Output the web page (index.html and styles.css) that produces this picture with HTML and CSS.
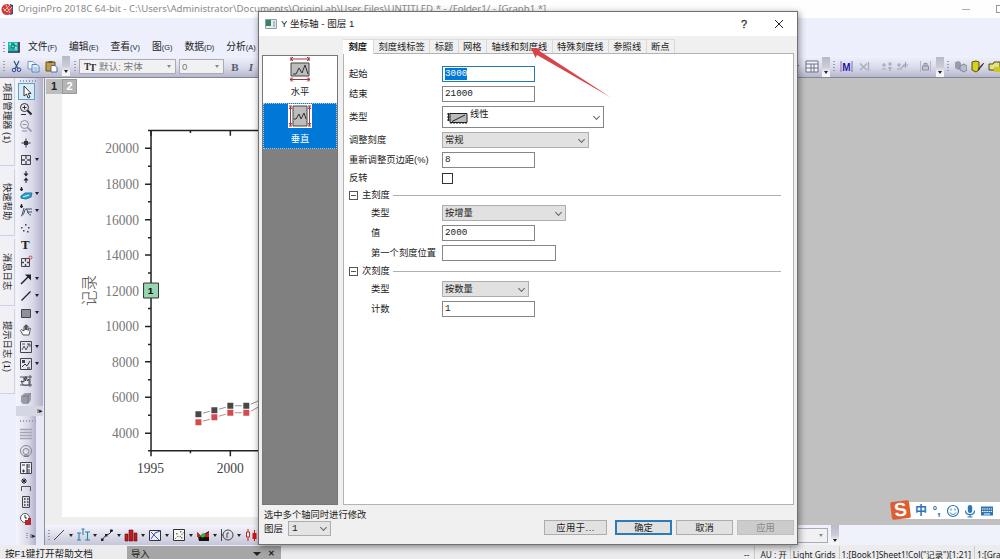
FILE: index.html
```
<!DOCTYPE html>
<html lang="zh-CN">
<head>
  <meta charset="UTF-8" />
  <title>OriginPro 2018C</title>
  <link rel="stylesheet" href="styles.css">
</head>
<body>
  <div class="app">
    <header class="titlebar">
      <svg class="app-icon" viewBox="0 0 13 13"><path d="M9 1l3 1v9l-3 1z" fill="#234a8c"/><circle cx="6" cy="6.5" r="5.5" fill="#cf3f3a"/><path d="M2 5l4 4 5-5M3 8l6-6M5 2l4 8" stroke="#f6b5ae" fill="none"/></svg>
      <span class="title-text">OriginPro 2018C 64-bit - C:\Users\Administrator\Documents\OriginLab\User Files\UNTITLED * - /Folder1/ - [Graph1 *]</span>
      <span class="win-min"></span><span class="win-max"></span>
    </header>

    <nav class="menubar">
      <i class="grip"></i>
      <svg class="menu-icon" viewBox="0 0 13 12"><path d="M1 1h10v9H1z" fill="#19b8b0"/><path d="M12 1v10H1" stroke="#223" stroke-width="1.6" fill="none"/><path d="M2 3h2v3h5v3M7 3h3" stroke="#dff" fill="none"/><circle cx="6" cy="5" r="2" fill="none" stroke="#065"/></svg>
      <span>文件<small>(F)</small></span>
      <span>编辑<small>(E)</small></span>
      <span>查看<small>(V)</small></span>
      <span>图<small>(G)</small></span>
      <span>数据<small>(D)</small></span>
      <span>分析<small>(A)</small></span>
    </nav>

    <div class="toolbar">
      <i class="grip"></i>
      <svg class="ico cut" viewBox="0 0 13 13"><path d="M4 1l4 8M9 1L5 9" stroke="#35507c" stroke-width="1.2"/><circle cx="4" cy="10" r="1.8" fill="none" stroke="#2448a0"/><circle cx="9" cy="9.7" r="1.8" fill="none" stroke="#2448a0"/></svg>
      <svg class="ico copy" viewBox="0 0 13 13"><path d="M1 1.500h5l2 2V9H1z" fill="#f4f8ff" stroke="#6f92c8"/><path d="M5 4.500h5l2 2V12H5z" fill="#e4eefc" stroke="#5580bc"/><path d="M6.500 8h4M6.500 10h4" stroke="#88a8d8"/></svg>
      <svg class="ico paste" viewBox="0 0 13 13"><path d="M1 2h9v9H1z" fill="#c99a3c" stroke="#6b5012"/><path d="M3.500 1h4v2h-4z" fill="#555"/><path d="M6 5.500h4l2 2V12H6z" fill="#fff" stroke="#556b98"/></svg>
      <i class="overflow"></i>
      <i class="grip"></i>
      <span class="combo combo-font"><b class="tt">T<small>T</small></b>默认: 宋体<i class="caret"></i></span>
      <span class="combo combo-size">0<i class="caret"></i></span>
      <b class="fmt">B</b><b class="fmt"><em>I</em></b>
      <div class="toolbar-right">
        <i class="caret dark"></i>
        <svg class="ico table" viewBox="0 0 14 13"><path d="M1 1h12v11H1zM1 4h12M1 8h12M6 4v8M9 4v8" fill="#f5f6fc" stroke="#6d7186"/></svg>
        <i class="overflow"></i>
        <i class="grip"></i>
        <svg class="ico mask" viewBox="0 0 13 13"><path d="M1 1v11M12 1v11" stroke="#8a6bbd"/><text x="6.500" y="10.500" text-anchor="middle">M</text></svg>
        <svg class="ico unmask" viewBox="0 0 13 13"><path d="M11.500 2v9M3 3.500l7 6.500M10 3.500L3 10" stroke="#a9abbd" stroke-width="1.300"/></svg>
        <i class="sep"></i>
        <svg class="ico shift-a" viewBox="0 0 13 13"><path d="M2 5h4M4 3v4M2 9h4M8 4h4M10 2v4M8 8h4M10 7v4" stroke="#a3a6b8" stroke-width="1.200"/></svg>
        <svg class="ico shift-b" viewBox="0 0 13 13"><path d="M1 5h4M3 3v4M1 9h5M7 5h5M9.500 2v6M5 8l4-3" stroke="#a0a3b6" stroke-width="1.200"/></svg>
        <i class="sep"></i>
        <svg class="ico lock" viewBox="0 0 13 13"><path d="M3.500 6h6v4h-6zM5 6V3.500h3V6" fill="#c4c5d2" stroke="#8a8da0"/><path d="M1.500 1v11M11.500 1v11" stroke="#b5b7c6"/></svg>
        <i class="overflow"></i>
        <i class="grip"></i>
        <svg class="ico cubes" viewBox="0 0 13 13"><path d="M1 2l4-1 2 2v6l-3 1-3-2z" fill="#999cab"/><path d="M6 6l4-2 3 2v4l-3 2-4-2z" fill="#bbbdcb" stroke="#80839a"/></svg>
        <svg class="ico script" viewBox="0 0 13 13"><path d="M1 2l4-1 3 1v8l-3 2-4-2z" fill="#d8d01e" stroke="#55520a"/><path d="M7 10l5-6" stroke="#333" stroke-width="1.300"/><path d="M12 4l1-1" stroke="#c22"/></svg>
        <svg class="ico folder" viewBox="0 0 13 13"><path d="M1 4h4l1-2h6v8H1z" fill="#e4e08a" stroke="#4c4a12"/><path d="M6 7h7v5H6z" fill="#ccc91a"/></svg>
      </div>
    </div>

    <main class="workspace">
      <aside class="side-tabs">
        <span class="side-tab tall">项目管理器 (1)</span>
        <span class="side-tab">快速帮助</span>
        <span class="side-tab">消息日志</span>
        <span class="side-tab last">提示日志 (1)</span>
      </aside>

      <aside class="tools">
        <div class="tool-group first">
          <i class="hgrip"></i>
          <span class="tool selected"><svg viewBox="0 0 14 14"><path d="M4 1v10l2.500-2 1.500 4 2-1-1.800-3.600H11z" fill="#fff" stroke="#333"/></svg></span>
          <span class="tool"><svg viewBox="0 0 14 14"><circle cx="5.500" cy="5.500" r="4" fill="none" stroke="#333"/><path d="M3.500 5.500h4M5.500 3.500v4M2 12.500h5" stroke="#333"/><path d="M8.500 8.500l4 4" stroke="#222" stroke-width="2"/></svg></span>
          <span class="tool"><svg viewBox="0 0 14 14"><circle cx="5.500" cy="5.500" r="4" fill="none" stroke="#8d8f9d"/><path d="M3.500 5.500h4M3 12h5" stroke="#8d8f9d"/><path d="M8.500 8.500l4 4" stroke="#8d8f9d" stroke-width="1.600"/></svg></span>
          <span class="tool"><svg viewBox="0 0 14 14"><path d="M7 2.500v9M2.500 7h9" stroke="#333"/><path d="M5 5h4v4H5z" fill="#333"/></svg></span>
          <span class="tool more"><svg viewBox="0 0 14 14"><path d="M2.500 2.500h9v9h-9z" fill="none" stroke="#444"/><path d="M7 3v3M7 8v3M3 7h3M8 7h3" stroke="#444" stroke-width="1.300"/></svg></span>
          <span class="tool"><svg viewBox="0 0 14 14"><path d="M7 1v4M7 13V9" stroke="#222"/><path d="M4.500 3.500h5L7 6.500zM4.500 10.500h5L7 7.500z" fill="#222"/></svg></span>
          <span class="tool more"><svg viewBox="0 0 14 14"><path d="M2.500 0v4M1 2.500h3" stroke="#222" stroke-width="1.300"/><path d="M2 9l4-3 7 0-1 4-5 2-5-1z" fill="#2aa5cf" stroke="#28708e"/><path d="M4 10l6-2" stroke="#bff"/></svg></span>
          <span class="tool more"><svg viewBox="0 0 14 14"><path d="M2.500 0v4M1 2.500h3" stroke="#222" stroke-width="1.300"/><path d="M2 12c4-1 3-7 5-7s1 6 5 6M7 5h6M8 8h5M5 4l-2 7" fill="none" stroke="#454e66"/></svg></span>
          <span class="tool"><svg viewBox="0 0 14 14"><path d="M6 3h1.500v1.500H6zM2 6h1.500v1.500H2zM9 6h1.500v1.500H9zM4 9h1.500v1.500H4zM8 10h1.500v1.500H8z" fill="#444"/></svg></span>
          <span class="tool text-tool">T</span>
          <span class="tool"><svg viewBox="0 0 14 14"><path d="M2.500 3.500h8v8h-8z" fill="none" stroke="#444"/><path d="M6.500 4v2.500M6.500 9v2M3 7.500h2M8 7.500h2" stroke="#444" stroke-width="1.300"/><circle cx="11.500" cy="2.500" r="1.500" fill="none" stroke="#d3404c"/></svg></span>
          <span class="tool more"><svg viewBox="0 0 14 14"><path d="M2 12l8-8" stroke="#222" stroke-width="1.500"/><path d="M6 2.500h6v6z" fill="#222"/></svg></span>
          <span class="tool more"><svg viewBox="0 0 14 14"><path d="M2.500 11.500l9-9" stroke="#222" stroke-width="1.300"/></svg></span>
          <span class="tool more"><svg viewBox="0 0 14 14"><path d="M2.500 3.500h9v8h-9z" fill="#8e909a" stroke="#444"/></svg></span>
          <span class="tool"><svg viewBox="0 0 14 14"><path d="M4 12L1.500 7.500l1-1L5 8V3.500h1.300V7V2h1.400v5V3h1.300v4.500L10.500 5l1 .5L10 12z" fill="#f8f8ff" stroke="#444" stroke-width=".9"/></svg></span>
          <span class="tool more"><svg viewBox="0 0 14 14"><path d="M1.500 1.500h11v11h-11z" fill="none" stroke="#444"/><path d="M3 10l2-4 2 4 3-6M8 4h3v3M3 4h3" fill="none" stroke="#555"/></svg></span>
          <span class="tool more"><svg viewBox="0 0 14 14"><path d="M1.500 1.500h11v11h-11z" fill="none" stroke="#444"/><path d="M3 3h3v3H3z" fill="#444"/><path d="M3 10l3-3 2 2 3-5M8 11h3" fill="none" stroke="#333"/></svg></span>
          <span class="tool"><svg viewBox="0 0 14 14"><path d="M1 3h12M1 11h12M11 1v12" stroke="#555"/><path d="M4 11L2 7l3 1V3.500L6.500 7l.5-4.500L8.500 7 10 5v6z" fill="#eef" stroke="#333" stroke-width=".9"/></svg></span>
          <span class="tool"><svg viewBox="0 0 14 14"><path d="M2 5l4-3h6v7l-3 4H4l-2-2z" fill="#999ba6"/><path d="M4 5h5v7M9 5l3-3" fill="none" stroke="#777986"/></svg></span>
          <i class="tool-end">ı▸</i>
        </div>
        <div class="tool-group second">
          <i class="hgrip"></i>
          <span class="tool"><svg viewBox="0 0 14 14"><path d="M1 2.500h12M1 5.500h12M1 8.500h12M1 11.500h12" stroke="#a4a5b0" stroke-width="1.400"/></svg></span>
          <span class="tool"><svg viewBox="0 0 14 14"><circle cx="7" cy="7" r="5.500" fill="none" stroke="#83858f"/><circle cx="7" cy="7.500" r="3" fill="none" stroke="#83858f"/><path d="M5 12h5" stroke="#666"/></svg></span>
          <span class="tool"><svg viewBox="0 0 14 14"><path d="M1.500 1.500h11v11h-11z" fill="#eef" stroke="#444"/><path d="M3 4h3M3 10h3M4.500 8.500v3M8 4h3M8 6h3M8 9h3M8 11h3M8 3v9" stroke="#333"/></svg></span>
          <span class="tool"><svg viewBox="0 0 14 14"><path d="M3 1l4 4M7 1L3 5M5 0v6M2 3h6" stroke="#222"/><path d="M2.500 13V8.500h9V13" fill="none" stroke="#555"/></svg></span>
          <span class="tool"><svg viewBox="0 0 14 14"><path d="M3.500 1.500h7v11h-7z" fill="none" stroke="#444"/><path d="M5 4h1.500M8 4h1.500M5 7h1.500M8 7h1.500M5 10h1.500M8 10h1.500" stroke="#333" stroke-width="1.400"/></svg></span>
          <span class="tool"><svg viewBox="0 0 14 14"><circle cx="6" cy="6" r="4.500" fill="#fff" stroke="#555"/><path d="M6 3v3h2" fill="none" stroke="#333"/><path d="M6 8h3V6h3v7H6z" fill="#b8232f"/></svg></span>
          <i class="tool-dots">⁝ ı▸</i>
        </div>
      </aside>

      <section class="document">
        <div class="page">
          <div class="layers"><b>1</b><b class="off">2</b></div>
          <svg class="chart" viewBox="62 77 198 440">
            <path class="axis" d="M151 129V451M148 129.500H260M148 450.500H260"/>
            <path class="ticks" d="M145 147.500h6M145 183.500h6M145 219h6M145 254.500h6M145 290.500h6M145 326h6M145 361.500h6M145 397h6M145 433h6
              M148 165.500h3M148 201h3M148 237h3M148 272.500h3M148 308h3M148 344h3M148 379.500h3M148 415h3
              M151 129v6M230.500 129v6M190.500 129v3M151 450v6M230.500 450v6M190.500 450v3"/>
            <g class="labels-y">
              <text x="139" y="152.500">20000</text>
              <text x="139" y="188.500">18000</text>
              <text x="139" y="224">16000</text>
              <text x="139" y="259.500">14000</text>
              <text x="139" y="295.500">12000</text>
              <text x="139" y="331">10000</text>
              <text x="139" y="366.500">8000</text>
              <text x="139" y="402">6000</text>
              <text x="139" y="438">4000</text>
            </g>
            <g class="labels-x">
              <text x="150.500" y="473">1995</text>
              <text x="230.500" y="473">2000</text>
            </g>
            <text class="axis-title" transform="translate(95 290) rotate(-90)">记录</text>
            <path class="series" d="M203 413l7-2M219 409l7-2M235 405.500h7M251 404l9-4"/>
            <path class="series red" d="M203 421l7-2M219 416l7-2M235 412.500h7M251 411l9-5"/>
            <path class="dots-black" d="M195.500 411h6v6h-6zM211.500 407h6v6h-6zM227.500 402.500h6v6h-6zM243.500 402.500h6v6h-6z"/>
            <path class="dots-red" d="M195.500 419h6v6h-6zM211.500 414h6v6h-6zM227.500 409.500h6v6h-6zM243.500 409.500h6v6h-6z"/>
            <path class="mark" d="M143.500 282.500h15v15h-15z"/>
            <text class="mark-text" x="150.500" y="293.500">1</text>
          </svg>
        </div>
        <div class="plotbar">
          <i class="grip"></i>
          <span class="plot"><svg viewBox="0 0 14 14"><path d="M2 12L12 2" stroke="#444"/></svg></span>
          <span class="plot"><svg viewBox="0 0 14 14"><path d="M1 5h4M3 5v7M1 12h4M7 1v6M5.500 1h3M9 4h5M11.500 4v8M9 12h5" stroke="#2f7fa8" stroke-width="1.100"/></svg></span>
          <span class="plot"><svg viewBox="0 0 14 14"><path d="M2 12l4-5 3-1 4-4" fill="none" stroke="#333"/><path d="M1 10.500h2.500V13H1zM5 6h2.500v2.500H5zM10 1.500h2.500V4H10z" fill="#222"/></svg></span>
          <span class="plot"><svg viewBox="0 0 14 14"><path d="M1 6h3v7H1zM5 2h4v11H5zM10 5h3v8h-3z" fill="#c11a1f" stroke="#601010" stroke-width=".6"/></svg></span>
          <span class="plot"><svg viewBox="0 0 14 14"><path d="M1.500 2.500h11v10h-11z" fill="#eef" stroke="#333"/><path d="M3 4l8 8M3 11l4-6 5-2" stroke="#3b50b5" fill="none"/></svg></span>
          <span class="plot"><svg viewBox="0 0 14 14"><path d="M1.500 1.500h11v11h-11z" fill="#f8f8f0" stroke="#333"/><path d="M3 11l3-3 2 1 4-5" stroke="#777" stroke-dasharray="2 1" fill="none"/><path d="M8 3h1.500v1.500H8zM4 5h1.500v1.500H4zM9 9h1.500v1.500H9z" fill="#777"/></svg></span>
          <span class="plot"><svg viewBox="0 0 14 14"><path d="M1 4l4 4 3-2 5-3v10H3z" fill="#111"/><path d="M1 4l4 5H1zM8 7l5-3v5H7z" fill="#d02020"/><path d="M4 8l3 2 3-4-3-1z" fill="#34ae3d"/></svg></span>
          <span class="plot"><svg viewBox="0 0 14 14"><path d="M1.500 1v12M1 7h2" stroke="#444"/><circle cx="8" cy="7" r="5" fill="none" stroke="#444"/><path d="M7 10V5h2" fill="none" stroke="#444"/></svg></span>
          <span class="plot"><svg viewBox="0 0 14 14"><path d="M4 1v12M10.500 2v11" stroke="#b22"/><path d="M2.500 4h3v5h-3z" fill="#fff" stroke="#b22"/><path d="M8.500 5h4v6h-4z" fill="#d11"/></svg></span>
          <div class="plotbar-right"><span class="combo combo-blank"><i class="caret"></i></span><i class="overflow"></i></div>
        </div>
      </section>
    </main>

    <footer class="statusbar">
      <span class="hint">按F1键打开帮助文档</span>
      <span class="import">导入<i class="caret dark"></i><b>✕</b></span>
      <div class="status-info"><span>--</span><span>AU : 开</span><span>Light Grids</span><span>1:[Book1]Sheet1!Col("记录")[1:21]</span><span>1:[Gra</span></div>
    </footer>
  </div>

  <div class="dialog">
    <div class="dialog-title">
      <svg class="dialog-icon" viewBox="0 0 12 10"><path d="M.5.500h11v9H.5z" fill="#e6eef0" stroke="#8ba0a6"/><path d="M1 1h5v6H1z" fill="#3c8064"/><path d="M8 2h2v6H8z" fill="#a9bfc8"/></svg>
      <span>Y 坐标轴 - 图层 1</span>
      <span class="help">?</span>
      <svg class="close" viewBox="0 0 10 10"><path d="M1 1l8 8M9 1L1 9" stroke="#222"/></svg>
    </div>
    <div class="dialog-main">
      <div class="axis-list">
        <div class="axis-item">
          <svg viewBox="0 0 24 26"><path d="M3 7h18v13H3z" fill="#bdbdbd" stroke="#444"/><path d="M5 18h3l3-6 3 5 3-8 3 9" fill="none" stroke="#333"/><path d="M2 3h20M2 23.500h20M3 1v4M21 1v4M3 21.500v4M21 21.500v4M5 1l-2 2 2 2M19 1l2 2-2 2M5 21.500l-2 2 2 2M19 21.500l2 2-2 2" fill="none" stroke="#a33440"/></svg>
          水平
        </div>
        <div class="axis-item current">
          <svg viewBox="0 0 24 26"><path d="M0 1h24v24H0z" fill="#fff"/><path d="M5 3h14v20H5z" fill="#bdbdbd" stroke="#444"/><path d="M6 16h2l3-5 2 5 3-6 2 6" fill="none" stroke="#333"/><path d="M2.500 3v20M21.500 3v20M1 3h3M20 3h3M1 23h3M20 23h3M1 6l1.500-2L4 6M20 6l1.500-2L23 6M1 20l1.500 2L4 20M20 20l1.500 2 1.500-2" fill="none" stroke="#a33440"/></svg>
          垂直
        </div>
      </div>
      <div class="tab-area">
        <div class="tabs">
          <span class="tab active">刻度</span><span class="tab">刻度线标签</span><span class="tab">标题</span><span class="tab">网格</span><span class="tab">轴线和刻度线</span><span class="tab">特殊刻度线</span><span class="tab">参照线</span><span class="tab">断点</span>
        </div>
        <div class="panel">
          <div class="row"><label>起始</label><span class="field w92 focus"><mark>3000</mark></span></div>
          <div class="row"><label>结束</label><span class="field w92">21000</span></div>
          <div class="row high"><label>类型</label><span class="field type-select"><svg viewBox="0 0 22 14"><path d="M4 2.500h17v9H4z" fill="#bbb" stroke="#222"/><path d="M6 10.500L19 4M1 3h3M1 6h3M1 9h3M2.500 2v8M5 13v-2M8 13v-2M11 13v-2M14 13v-2M17 13v-2M20 13v-2" stroke="#222"/></svg>线性<i class="chev"></i></span></div>
          <div class="row"><label>调整刻度</label><span class="field select w147">常规<i class="chev"></i></span></div>
          <div class="row"><label>重新调整页边距(%)</label><span class="field w92">8</span></div>
          <div class="row check-row"><label>反转</label><span class="check"></span></div>
          <div class="group"><i class="minus"></i><span>主刻度</span></div>
          <div class="row sub"><label>类型</label><span class="field select w124">按增量<i class="chev"></i></span></div>
          <div class="row sub"><label>值</label><span class="field w92">2000</span></div>
          <div class="row sub"><label>第一个刻度位置</label><span class="field w114"></span></div>
          <div class="group"><i class="minus"></i><span>次刻度</span></div>
          <div class="row sub"><label>类型</label><span class="field select w87">按数量<i class="chev"></i></span></div>
          <div class="row sub"><label>计数</label><span class="field w92">1</span></div>
        </div>
      </div>
    </div>
    <div class="dialog-foot">
      <div class="layer-pick">
        <span>选中多个轴同时进行修改</span>
        <div>图层<span class="field layer-select">1<i class="chev"></i></span></div>
      </div>
      <div class="buttons">
        <span class="btn">应用于...</span><span class="btn primary">确定</span><span class="btn">取消</span><span class="btn disabled">应用</span>
      </div>
    </div>
  </div>

  <svg class="pointer" viewBox="0 0 82 54"><path d="M1 2l10 .5-1.500 2.500L81 51.500 7 9 5.500 12z" fill="#d9434a"/></svg>

  <div class="ime">
    <b class="ime-logo">S</b>
    <b>中</b><b class="punct">°,</b>
    <svg viewBox="0 0 14 14"><circle cx="7" cy="7" r="5.500" fill="none" stroke="#2d76b5" stroke-width="1.200"/><path d="M5 4.500v2M9 4.500v2M4 8.500c1.500 2.500 4.500 2.500 6 0" fill="none" stroke="#2d76b5"/></svg>
    <svg viewBox="0 0 14 14"><rect x="4.800" y="1" width="4.400" height="8" rx="2.200" fill="#2d76b5"/><path d="M2.500 6.500c0 5.500 9 5.500 9 0M7 10.500V13M4.500 13h5" fill="none" stroke="#2d76b5" stroke-width="1.200"/></svg>
    <svg viewBox="0 0 14 14"><path d="M1 2.500h12v9H1z" fill="#2d76b5"/><path d="M2 5h10M2 7.500h10" stroke="#fff" stroke-dasharray="1.500 .7"/><path d="M4 10h6" stroke="#fff"/></svg>
  </div>
</body>
</html>
```
FILE: styles.css
```
* { box-sizing: border-box; }

body {
  margin: 0;
  width: 1000px;
  height: 559px;
  overflow: hidden;
  position: relative;
  font-family: "Liberation Sans", "Noto Sans CJK SC", sans-serif;
  font-size: 9.3px;
  line-height: 1;
  color: #222;
  white-space: nowrap;
}

i { font-style: normal; }
svg { display: block; flex: none; }

.app {
  display: flex;
  flex-direction: column;
  width: 1000px;
  height: 559px;
  background: #edf0fc;
}

/* main window */
.titlebar {
  display: flex;
  align-items: center;
  height: 18px;
  padding-left: 1px;
  background: #fefefe;
}
.app-icon { width: 13px; height: 13px; }
.title-text {
  margin-left: 4px;
  font-family: "Noto Sans", sans-serif;
  font-size: 9.65px;
  color: #8a8a8a;
}
.win-min { width: 8px; height: 1px; margin-left: auto; background: #aaa; }
.win-max { width: 10px; height: 8px; margin: 0 -6px 0 26px; border: 1px solid #999; }

.menubar {
  display: flex;
  align-items: center;
  height: 38px;
  padding: 20px 0 0 3px;
  gap: 12px;
  font-size: 9.8px;
}
.menubar small { font-size: 7.4px; }
.menu-icon { width: 13px; height: 12px; margin: 0 -4px 0 -10px; }

.grip {
  width: 2px;
  height: 11px;
  flex: none;
  background: repeating-linear-gradient(#9c9ead 0 1px, transparent 1px 3px);
}
.toolbar, .plotbar {
  display: flex;
  align-items: center;
  height: 22px;
  flex: none;
  padding-left: 3px;
  background: linear-gradient(#f0f2fc, #dcddeb 50%, #b7b8cd);
  border-bottom: 1px solid #85868f;
}
.ico { width: 13px; height: 13px; }
.cut { margin-left: 5px; }
.copy { margin-left: 4px; }
.paste { margin-left: 5px; margin-right: 4px; }
.overflow {
  width: 8px;
  height: 20px;
  flex: none;
  align-self: flex-start;
  background: linear-gradient(#b9bac9, #cbccd8 50%, #f4f4fa 80%);
  display: flex;
  justify-content: center;
  align-items: flex-end;
  padding-bottom: 3px;
}
.overflow::after, .caret::after {
  content: "";
  border: 2px solid transparent;
  border-top: 3px solid #222;
  border-bottom: 0;
}
.overflow + .grip { margin-left: 4px; }
.combo {
  display: flex;
  align-items: center;
  height: 15px;
  border: 1px solid #a9abb5;
  background: #f1f1f4;
  color: #777;
  font-size: 9.6px;
}
.caret { margin-left: auto; padding: 0 4px; display: flex; }
.combo .caret::after { border-top-color: #888; }
.combo-font { width: 97px; margin-left: 3px; }
.combo-size { width: 45px; margin-left: 3px; padding-left: 2px; }
.tt { color: #333; font-family: "Liberation Serif", serif; margin: 0 4px; letter-spacing: -1px; }
.tt small { font-size: 10px; position: relative; top: 1px; }
.fmt { width: 16px; text-align: center; font: bold 11px "Liberation Serif", serif; color: #555b6b; }
.combo-size + .fmt { margin-left: 3px; }
.toolbar-right { display: flex; align-items: center; height: 20px; margin-left: auto; width: 206px; }
.toolbar-right .caret { margin: 0; padding: 0 6px 0 1px; }
.table { width: 14px; margin-right: 1px; }
.toolbar-right .overflow { margin-left: 2px; }
.mask { margin-left: 5px; }
.mask text { font: bold 10px "Liberation Sans", sans-serif; fill: #2b16a8; }
.unmask { margin-left: 4px; }
.sep { width: 1px; height: 10px; margin: 0 5px; background: #b6b8c6; }
.shift-b { margin-left: 3px; }
.lock + .overflow { margin-left: 4px; }
.toolbar-right .overflow + .grip { margin-left: 3px; }
.cubes { margin: 0 4px 0 5px; }
.script { margin-right: 4px; }

.workspace { display: flex; height: 467px; }
.side-tabs { width: 16px; display: flex; flex-direction: column; gap: 3px; padding-right: 1px; }
.side-tab {
  width: 15px;
  height: 67px;
  display: flex;
  align-items: center;
  justify-content: center;
  writing-mode: vertical-rl;
  text-orientation: sideways;
  background: #f1f1f5;
  border: solid #d1d2da;
  border-width: 0 1px 1px 0;
  padding-right: 2px;
}
.side-tab.tall { height: 88px; padding-bottom: 16px; }
.side-tab.last { height: 85px; padding-bottom: 8px; }

.tools { width: 28px; background: #e8e9f6; }
.tool-group {
  display: flex;
  flex-direction: column;
  background: linear-gradient(90deg, #f4f5fc, #d9daea 60%, #b1b2ca);
}
.tool-group.first { width: 27px; height: 338px; padding-top: 2px; }
.tool-group.second { width: 20px; height: 129px; padding-top: 4px; }
.hgrip { height: 2px; width: 17px; margin: 0 0 1px 4px; background: repeating-linear-gradient(90deg, #9c9ead 0 1px, transparent 1px 3px); }
.second .hgrip { margin-bottom: 3px; }
.tool {
  height: 17px;
  width: 27px;
  flex: none;
  padding-left: 3px;
  display: flex;
  align-items: center;
}
.tool svg { width: 14px; height: 14px; }
.tool.selected { width: 17px; margin-left: 2px; padding-left: 1px; border: 1px solid #5f9fc9; background: #d8ecf9; }
.tool.more::after {
  content: "";
  margin-left: 2px;
  border: 2px solid transparent;
  border-top: 3px solid #222;
  border-bottom: 0;
}
.text-tool { padding-left: 5px; font: bold 13px "Liberation Serif", serif; }
.tool-end { height: 10px; margin-top: auto; text-align: right; font-size: 7px; line-height: 10px; background: #d5d6e4; }
.tool-dots { margin-top: 5px; text-align: right; font-size: 7px; }

.document { flex: 1; min-width: 0; background: #c0c0c0; display: flex; flex-direction: column; border-left: 1px solid #8f909a; }
.page { width: 217px; height: 447px; background: #eee; padding-left: 17px; display: flex; }
.layers { width: 0; display: flex; }
.layers b {
  width: 16px;
  height: 15px;
  flex: none;
  background: #bdbdbd;
  text-align: center;
  font-size: 11px;
  line-height: 15px;
  position: relative;
  left: -16px;
  top: 1px;
}
.layers .off { color: #fff; background: #b4b4b4; border: 1px solid #999; line-height: 13px; width: 15px; }
.chart { width: 198px; height: 439px; background: #fff; }
.axis, .ticks { fill: none; stroke: #222; stroke-width: 1.500; }
.labels-y text, .labels-x text { font: 13.6px "Liberation Serif", serif; fill: #777; text-anchor: end; }
.labels-x text { text-anchor: middle; fill: #444; }
.axis-title { font: 300 15.500px "Noto Sans CJK SC", sans-serif; fill: #444; text-anchor: middle; }
.series { fill: none; stroke: #777; stroke-width: .8; }
.series.red { stroke: #b06a6e; }
.dots-black { fill: #484848; }
.dots-red { fill: #d44a50; }
.mark { fill: #98d5b2; stroke: #333; }
.mark-text { font: bold 10px "Liberation Sans", sans-serif; text-anchor: middle; }

.plotbar { height: 20px; border: 0; background: linear-gradient(#f4f5fc, #c5c6d9); }
.plot { width: 24px; display: flex; align-items: center; }
.plotbar .grip { margin-right: 2px; }
.plot svg { width: 14px; height: 14px; }
.plot::after { content: ""; margin-left: 3px; border: 2px solid transparent; border-top: 3px solid #222; border-bottom: 0; }
.plotbar-right { margin-left: auto; height: 20px; display: flex; align-items: center; width: 260px; background: #eff1fb; }
.combo-blank { width: 88px; margin-right: 3px; }

.statusbar {
  height: 14px;
  flex: none;
  display: flex;
  background: #ececee;
  overflow: hidden;
  padding-top: 1px;
  line-height: 16px;
}
.hint { width: 127px; padding-left: 5px; font-size: 9.6px; }
.import { width: 154px; padding: 0 6px 0 4px; background: #a6a6a6; display: flex; align-items: center; height: 16px; }
.import b { font-size: 8px; margin-left: 3px; }
.import .caret::after { border-width: 4px 4px 0; }
.status-info { display: flex; margin-left: auto; width: 259px; padding-left: 3px; font: 8.350px/17px "Noto Sans", "Noto Sans CJK SC", sans-serif; }
.status-info span { border-right: 1px solid #ccc; padding-right: 3px; margin-right: 2px; }
.status-info span:first-child { padding-right: 5px; margin-right: 5px; }
.status-info span:last-child { border: 0; padding: 0; margin: 0; }

/* axis dialog */
.dialog {
  position: absolute;
  left: 258px;
  top: 11px;
  width: 540px;
  height: 534px;
  display: flex;
  flex-direction: column;
  background: #f0f0f0;
  border: 1px solid #707070;
  box-shadow: 1px 2px 7px rgba(0, 0, 0, .45);
}
.dialog-title { height: 24px; flex: none; background: #fff; display: flex; align-items: center; padding: 0 13px 0 6px; font-size: 9.6px; }
.dialog-icon { width: 12px; height: 10px; margin-right: 4px; }
.help { margin-left: auto; font-size: 11px; color: #333; -webkit-text-stroke: .3px #333; }
.close { width: 10px; height: 10px; margin-left: 27px; }
.dialog-main { display: flex; height: 469px; padding: 3px 3px 0; }
.axis-list { width: 76px; height: 450px; margin: 16px 5px 0 0; background: #808080; border: 1px solid #777; }
.axis-item { height: 47px; background: #fff; display: flex; flex-direction: column; align-items: center; gap: 6px; }
.axis-item svg { width: 24px; height: 26px; }
.axis-item.current { height: 46px; background: #0078d7; color: #fff; border: 1px dotted #b8c9d6; }
.axis-item.current svg { margin-top: -1px; }
.tab-area { width: 451px; }
.tabs { display: flex; height: 14px; }
.tab { padding: 0 4.400px; line-height: 14px; border-right: 1px solid #d9d9d9; border-top: 1px solid #ddd; }
.tab.active { height: 15px; z-index: 1; background: #fff; font-weight: bold; padding: 0 5.500px; width: 31px; }
.panel { height: 452px; background: #fff; border: 1px solid #b3b3b3; padding: 10px 12px 0 5px; }
.row { display: flex; align-items: center; height: 20px; }
.row label { width: 93px; flex: none; padding-top: 1px; }
.row.high { height: 26px; }
.row.check-row { height: 17px; }
.row.sub { padding-left: 22px; }
.row.sub label { width: 71px; }
.field {
  height: 16px;
  display: flex;
  align-items: center;
  padding-left: 2px;
  border: 1px solid #868686;
  background: #fff;
  font-family: "Liberation Mono", "Noto Sans CJK SC", monospace;
}
.select { background: #e1e1e1; border-color: #adadad; padding-top: 1px; }
.focus { border-color: #2678b4; }
.focus mark { background: #0078d7; color: #fff; padding: 1px 0; }
.w87 { width: 87px; }
.w92 { width: 93px; }
.w114 { width: 114px; }
.w124 { width: 124px; }
.w147 { width: 147px; }
.type-select { width: 162px; height: 22px; padding-bottom: 5px; }
.type-select svg { width: 22px; height: 14px; margin: 6px 2px 0 1px; }
.type-select .chev { margin-top: 5px; }
.chev { margin-left: auto; margin-right: 4px; width: 5px; height: 5px; border: solid #666; border-width: 0 1px 1px 0; transform: translateY(-1px) rotate(45deg); }
.check { width: 11px; height: 11px; border: 1px solid #333; }
.group { display: flex; align-items: center; height: 16px; }
.group span { padding-top: 1px; }
.group::after { content: ""; flex: 1; height: 1px; margin-left: 3px; background: #b0b0b0; }
.minus { width: 9px; height: 9px; margin-right: 4px; border: 1px solid #555; background: linear-gradient(#555, #555) center / 5px 1px no-repeat; }

.dialog-foot { display: flex; padding: 5px 3px 0 5px; }
.layer-pick { padding-top: 1px; }
.layer-pick > div { display: flex; align-items: center; margin-top: 1px; gap: 5px; font-size: 9.5px; }
.layer-select { width: 43px; height: 15px; background: #e4e4e4; border-color: #adadad; padding-left: 3px; }
.buttons { display: flex; gap: 4px; margin: 10px 0 0 auto; }
.btn { width: 57px; height: 15px; border: 1px solid #adadad; background: #e1e1e1; text-align: center; line-height: 14px; }
.btn:first-child { width: 63px; margin-right: 4px; letter-spacing: .5px; }
.btn.primary { border: 2px solid #2a7bb8; line-height: 12px; }
.btn.disabled { background: #ccc; border-color: #bfbfbf; color: #898989; }

.pointer { position: absolute; left: 530px; top: 46px; width: 82px; height: 54px; }

.ime {
  position: absolute;
  left: 900px;
  top: 502px;
  width: 100px;
  height: 17px;
  display: flex;
  align-items: center;
  gap: 3px;
  background: #fff;
  color: #2d76b5;
  font-size: 12px;
}
.ime svg { width: 14px; height: 14px; }
.ime-logo {
  width: 19px;
  height: 18px;
  margin: -2px 2px 0 -9px;
  flex: none;
  background: #df5d2f;
  border-radius: 2px;
  color: #fff;
  font-size: 19px;
  line-height: 18px;
  text-align: center;
  transform: rotate(-7deg);
}
.punct { width: 13px; text-align: center; }
```
